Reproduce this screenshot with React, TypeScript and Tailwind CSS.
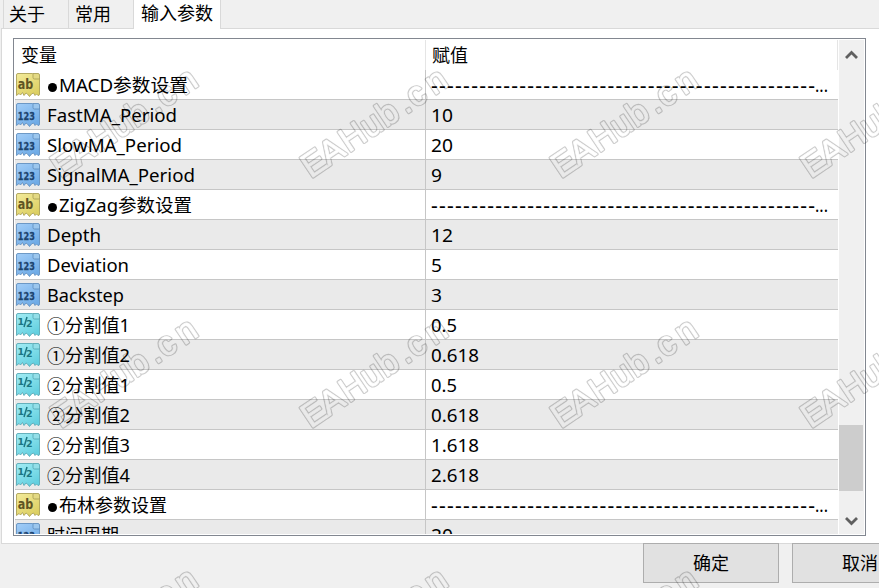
import React from "react";

type Kind = "ab" | "int" | "frac";
type Row = { kind: Kind; prefix?: string; name: string; value: string; w: number; vw: number };

const DASHES = "------------------------------------------------";

const rows: Row[] = [
  { kind: "ab", prefix: "●", name: "MACD参数设置", value: DASHES, w: 129, vw: 384 },
  { kind: "int", name: "FastMA_Period", value: "10", w: 130, vw: 22 },
  { kind: "int", name: "SlowMA_Period", value: "20", w: 135, vw: 22 },
  { kind: "int", name: "SignalMA_Period", value: "9", w: 148, vw: 11 },
  { kind: "ab", prefix: "●", name: "ZigZag参数设置", value: DASHES, w: 133, vw: 384 },
  { kind: "int", name: "Depth", value: "12", w: 54, vw: 22 },
  { kind: "int", name: "Deviation", value: "5", w: 82, vw: 11 },
  { kind: "int", name: "Backstep", value: "3", w: 77, vw: 11 },
  { kind: "frac", prefix: "①", name: "分割值1", value: "0.5", w: 65, vw: 26 },
  { kind: "frac", prefix: "①", name: "分割值2", value: "0.618", w: 65, vw: 48 },
  { kind: "frac", prefix: "②", name: "分割值1", value: "0.5", w: 65, vw: 26 },
  { kind: "frac", prefix: "②", name: "分割值2", value: "0.618", w: 65, vw: 48 },
  { kind: "frac", prefix: "②", name: "分割值3", value: "1.618", w: 65, vw: 48 },
  { kind: "frac", prefix: "②", name: "分割值4", value: "2.618", w: 65, vw: 48 },
  { kind: "ab", prefix: "●", name: "布林参数设置", value: DASHES, w: 108, vw: 384 },
  { kind: "int", name: "时间周期", value: "20", w: 72, vw: 22 },
];

const palette = {
  ab: { light: "#f3eb9b", dark: "#dccf62", edge: "#aca157", ink: "#5f5524", fold: "#e3d983" },
  int: { light: "#a3cef8", dark: "#6fabe6", edge: "#6391c0", ink: "#1d4470", fold: "#9cc7ee" },
  frac: { light: "#a3edf5", dark: "#62cfdf", edge: "#5aa9b5", ink: "#1c7682", fold: "#93dfe8" },
};

function TypeIcon({ kind }: { kind: Kind }) {
  const c = palette[kind];
  const id = "fill-" + kind;
  return (
    <svg width="26" height="27" viewBox="0 0 26 27" className="shrink-0">
      <defs>
        <linearGradient id={id} x1="0" y1="0" x2="0.6" y2="1">
          <stop offset="0" stopColor={c.light} />
          <stop offset="1" stopColor={c.dark} />
        </linearGradient>
      </defs>
      <path
        d="M3 3.5H17.5L24.5 8.5V24Q24.5 25.5 23 25.5L21.5 24L20 25.5L18.5 23L16.5 24L14.5 26.5L12.5 24L11 23L9 25.5L7.5 22.5L5.5 25L4 23.5L1.5 25.5V5Q1.5 3.5 3 3.5Z"
        fill={"url(#" + id + ")"}
        stroke={c.edge}
        strokeWidth="0.9"
        strokeLinejoin="round"
      />
      <path d="M18 3.5H23Q24.5 3.5 24.5 5V9H19.5Q18 9 18 7.5Z" fill={c.fold} stroke={c.edge} strokeWidth="0.9" />
      {kind === "frac" ? (
        <g fontFamily="DejaVu Sans" fontWeight="bold" fill={c.ink}>
          <text x="2.6" y="14.5" fontSize="9.5">1</text>
          <line x1="12" y1="7" x2="9" y2="17" stroke={c.ink} strokeWidth="1.5" />
          <text x="11" y="17" fontSize="9.5">2</text>
        </g>
      ) : (
        <text
          x="2.8"
          y={kind === "ab" ? 19 : 19.5}
          fontSize={kind === "ab" ? 14.5 : 11}
          textLength={kind === "ab" ? 15.5 : 17}
          lengthAdjust="spacingAndGlyphs"
          fontFamily="DejaVu Sans"
          fontWeight="bold"
          fill={c.ink}
          stroke={c.ink}
          strokeWidth={kind === "ab" ? 0 : 0.3}
        >
          {kind === "ab" ? "ab" : "123"}
        </text>
      )}
    </svg>
  );
}

/** Single line of text fitted to a fixed width. */
function Fit({ w, y = 21.5, spaced = false, children }: { w: number; y?: number; spaced?: boolean; children: string }) {
  return (
    <svg width={w} height="29" className="shrink-0 overflow-visible">
      <text x="0" y={spaced ? 22.5 : y} fontSize={spaced ? 21 : 18} fill="#000" textLength={w} lengthAdjust={spaced ? "spacing" : "spacingAndGlyphs"}>
        {children}
      </text>
    </svg>
  );
}

function Watermark() {
  const tiles = [-188.5, 61.5, 311.5, 561.5, 811.5].flatMap((x) => [180, 430, 680].map((y) => [x, y]));
  const xs = "0 21.5 46 71 91 115 126 149";
  return (
    <svg width="879" height="588" className="pointer-events-none absolute left-0 top-0">
      <defs>
        <mask id="outline" maskUnits="userSpaceOnUse" x="0" y="0" width="879" height="588">
          {tiles.map(([x, y]) => (
            <g key={x + "-" + y} transform={`translate(${x} ${y}) rotate(-34)`} fontFamily="Liberation Sans" fontSize="34" strokeLinejoin="round">
              <text x={xs} y="-1.5" fill="#fff" stroke="#fff" strokeWidth="2.9">EAHub.cn</text>
              <text x={xs} y="-1.5" fill="#000" stroke="#000" strokeWidth="0.7">EAHub.cn</text>
            </g>
          ))}
        </mask>
      </defs>
      <rect width="879" height="588" fill="#000" fillOpacity="0.2" mask="url(#outline)" />
    </svg>
  );
}

export default function App() {
  return (
    <div className="relative flex h-[588px] w-[879px] flex-col overflow-hidden bg-[#f0f0f0] font-['Noto_Sans','Noto_Sans_CJK_SC',sans-serif] text-[18px] text-black">
      <div className="flex h-[28px] shrink-0 pl-[3px] leading-[28px]">
        <div className="w-[65px] border-l border-[#d9d9d9] pl-[5px]">关于</div>
        <div className="w-[65px] border-l border-[#d9d9d9] pl-[6px]">常用</div>
        <div className="z-10 h-[29px] w-[88px] border-x border-[#d9d9d9] bg-white pl-[7px] leading-[26px]">输入参数</div>
      </div>
      <div className="ml-px h-[516px] shrink-0 border border-r-0 border-[#d9d9d9] bg-white pl-[11px] pt-[9px]">
        <div className="flex h-[498px] w-[853px] overflow-hidden border border-[#828790] p-px">
          <div className="w-[823px] shrink-0 overflow-hidden">
            <div className="flex h-[30px] leading-[30px]">
              <div className="w-[411px] border-r border-[#e5e5e5] pl-[6px]">变量</div>
              <div className="flex-1 border-r border-[#e5e5e5] pl-[6px]">赋值</div>
            </div>
            {rows.map((r, i) => (
              <div key={i} className={`flex h-[30px] border-b border-[#c6c6c6] ${i % 2 ? "bg-[#eaeaea]" : "bg-white"}`}>
                <div className="flex w-[411px] items-start border-r border-[#c6c6c6]">
                  <TypeIcon kind={r.kind} />
                  <div className="flex pl-[6px]">
                    {r.prefix === "●" && (
                      <span className="flex w-[12px] items-center pl-px">
                        <span className="mt-[5px] h-[9px] w-[9px] rounded-full bg-black" />
                      </span>
                    )}
                    {r.prefix && r.prefix !== "●" && <Fit w={18} y={23}>{r.prefix}</Fit>}
                    <Fit w={r.w}>{r.name}</Fit>
                  </div>
                </div>
                <div className="flex pl-[5px]">
                  <Fit w={r.vw} spaced={r.value === DASHES}>{r.value}</Fit>
                  {r.value === DASHES && <Fit w={13}>...</Fit>}
                </div>
              </div>
            ))}
          </div>
          <div className="ml-px flex w-[25px] flex-col bg-[#f0f0f0]">
            <svg width="24" height="30" className="shrink-0">
              <path d="M7 18L12.5 12.5L18 18" fill="none" stroke="#606060" strokeWidth="2.8" />
            </svg>
            <div className="mt-[355px] h-[66px] w-[24px] shrink-0 bg-[#cdcdcd]" />
            <svg width="24" height="42" className="shrink-0">
              <path d="M7 27L12.5 32.5L18 27" fill="none" stroke="#606060" strokeWidth="2.8" />
            </svg>
          </div>
        </div>
      </div>
      <div className="flex shrink-0 gap-[13px] pl-[643px]">
        <button className="-mt-px h-[40px] w-[136px] shrink-0 border border-[#adadad] bg-[#e1e1e1]">确定</button>
        <button className="-mt-px h-[40px] w-[136px] shrink-0 border border-[#adadad] bg-[#e1e1e1]">取消</button>
      </div>
      <Watermark />
    </div>
  );
}
